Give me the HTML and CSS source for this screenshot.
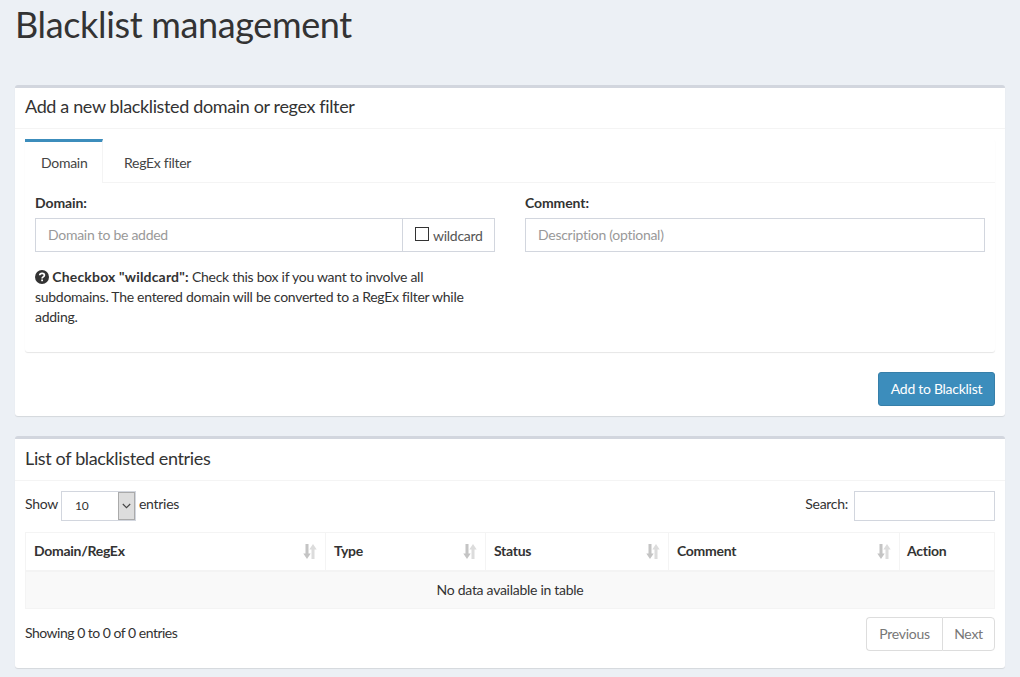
FILE: index.html
```html
<!DOCTYPE html>
<html lang="en">
<head>
  <meta charset="UTF-8" />
  <title>Blacklist management</title>
  <link rel="stylesheet" href="styles.css">
</head>
<body>
  <svg width="0" height="0" class="defs">
    <symbol id="sort" viewBox="0 0 15 15">
      <path d="M2.500 0h3v9.500h2.200L4 15 .3 9.500h2.200z" fill="#c4c4c4"/>
      <path d="M11.500 15h-3V5.500H6.300L10 0l3.700 5.500h-2.200z" fill="#dcdcdc"/>
    </symbol>
  </svg>

  <h1 class="page-title">Blacklist management</h1>

  <section class="box">
    <div class="box-header"><h3>Add a new blacklisted domain or regex filter</h3></div>
    <div class="box-body">
      <div class="tabs">
        <ul class="tab-list">
          <li class="tab active">Domain</li>
          <li class="tab">RegEx filter</li>
        </ul>
        <div class="tab-content">
          <div class="form-row">
            <div class="form-col">
              <label class="field-label">Domain:</label>
              <div class="input-group">
                <input class="form-control" type="text" placeholder="Domain to be added">
                <label class="addon"><input class="check" type="checkbox"> wildcard</label>
              </div>
              <p class="help">
                <svg class="help-icon" viewBox="0 0 14 14" width="14" height="14">
                  <circle cx="7" cy="7" r="7" fill="#333"/>
                  <path d="M4.700 5.300C4.800 4 5.800 3.300 7.100 3.300c1.300 0 2.300.8 2.300 1.900 0 1.700-2.300 1.700-2.300 3.200" fill="none" stroke="#fff" stroke-width="1.700"/>
                  <rect x="6.200" y="9.500" width="1.800" height="1.700" fill="#fff"/>
                </svg>
                <strong>Checkbox "wildcard":</strong> Check this box if you want to involve all<br>
                subdomains. The entered domain will be converted to a RegEx filter while<br>
                adding.
              </p>
            </div>
            <div class="form-col">
              <label class="field-label">Comment:</label>
              <input class="form-control" type="text" placeholder="Description (optional)">
            </div>
          </div>
        </div>
      </div>
    </div>
    <div class="box-footer">
      <button class="btn-primary" type="button">Add to Blacklist</button>
    </div>
  </section>

  <section class="box">
    <div class="box-header box-header-list"><h3>List of blacklisted entries</h3></div>
    <div class="box-body box-body-list">
      <div class="table-top">
        <div class="length">
          Show
          <div class="select"><span class="select-value">10</span><span class="select-arrow"><svg width="9" height="6" viewBox="0 0 9 6"><path d="M.8 1l3.700 3.700L8.200 1" fill="none" stroke="#444" stroke-width="1.100"/></svg></span></div>
          entries
        </div>
        <div class="search">Search: <input class="search-input" type="text"></div>
      </div>
      <table class="data-table">
        <thead>
          <tr>
            <th class="col-domain"><div class="th-inner">Domain/RegEx<svg class="sort-icon"><use href="#sort"/></svg></div></th>
            <th class="col-type"><div class="th-inner">Type<svg class="sort-icon"><use href="#sort"/></svg></div></th>
            <th class="col-status"><div class="th-inner">Status<svg class="sort-icon"><use href="#sort"/></svg></div></th>
            <th class="col-comment"><div class="th-inner">Comment<svg class="sort-icon"><use href="#sort"/></svg></div></th>
            <th class="col-action">Action</th>
          </tr>
        </thead>
        <tbody>
          <tr><td colspan="5">No data available in table</td></tr>
        </tbody>
      </table>
      <div class="table-bottom">
        <div class="info">Showing 0 to 0 of 0 entries</div>
        <div class="pagination"><a class="page-btn page-prev">Previous</a><a class="page-btn page-next">Next</a></div>
      </div>
    </div>
  </section>
</body>
</html>
```

FILE: styles.css
```css
* {
  box-sizing: border-box;
}
body {
  margin: 0;
  padding: 0 15px;
  background: #ecf0f5;
  color: #333;
  font-family: "Lato", "Liberation Sans", sans-serif;
  font-size: 14px;
  line-height: 20px;
  letter-spacing: -0.28px;
}
.defs {
  display: block;
  height: 0;
}
.page-title {
  margin: 0;
  padding-top: 4px;
  height: 85px;
  font-size: 36px;
  line-height: 40px;
  font-weight: 400;
  letter-spacing: -0.35px;
}
.box {
  background: #fff;
  border-top: 3px solid #d2d6de;
  border-radius: 3px;
  box-shadow: 0 1px 1px rgba(0,0,0,0.1);
  margin-bottom: 20px;
}
.box-header {
  height: 41px;
  padding: 8px 10px;
  border-bottom: 1px solid #f4f4f4;
}
.box-header-list {
  height: 42px;
  padding-top: 9px;
}
.box-header h3 {
  margin: 0;
  font-size: 18px;
  line-height: 20px;
  font-weight: 400;
  letter-spacing: -0.36px;
}
.box-body {
  padding: 10px;
}
.box-body-list {
  padding-bottom: 17px;
}
.tabs {
  border-radius: 3px;
  box-shadow: 0 1px 1px rgba(0,0,0,0.1);
}
.tab-list {
  display: flex;
  margin: 0;
  padding: 0;
  list-style: none;
  height: 44px;
  border-bottom: 1px solid #f4f4f4;
}
.tab {
  padding: 11px 16px 0;
  margin-right: 5px;
  border-top: 3px solid transparent;
  color: #444;
}
.tab.active {
  width: 78px;
  height: 44px;
  border-top-color: #3c8dbc;
  border-right: 1px solid #f4f4f4;
  background: #fff;
}
.tab-content {
  height: 169px;
  padding: 10px;
}
.form-row {
  display: grid;
  grid-template-columns: 1fr 1fr;
  gap: 30px;
}
.field-label {
  display: block;
  margin-bottom: 5px;
  font-weight: 700;
  letter-spacing: -0.1px;
}
.form-control {
  display: block;
  width: 100%;
  height: 34px;
  padding: 5px 12px 7px;
  border: 1px solid #d2d6de;
  font: inherit;
  letter-spacing: inherit;
  color: #555;
  outline: none;
}
.form-control::placeholder {
  color: #999;
  opacity: 1;
}
.input-group {
  display: flex;
}
.input-group .form-control {
  flex: 1;
  min-width: 0;
}
.addon {
  display: flex;
  align-items: center;
  gap: 4px;
  width: 93px;
  flex-shrink: 0;
  margin-left: -1px;
  padding: 2px 0 0 12px;
  border: 1px solid #d2d6de;
  color: #555;
}
.check {
  appearance: none;
  width: 14px;
  height: 14px;
  margin: -4px 0 0;
  border: 1px solid #333;
  background: #fff;
}
.help {
  margin: 15px 0 0;
}
.help strong {
  letter-spacing: 0.17px;
}
.help-icon {
  vertical-align: -2px;
}
.box-footer {
  display: flex;
  justify-content: flex-end;
  padding: 10px;
}
.btn-primary {
  height: 34px;
  width: 117px;
  padding: 0;
  background: #3c8dbc;
  border: 1px solid #367fa9;
  border-radius: 3px;
  color: #fff;
  font: inherit;
  letter-spacing: inherit;
}
.table-top {
  display: flex;
  justify-content: space-between;
  height: 41px;
}
.length, .search {
  display: flex;
  align-items: flex-start;
  gap: 3px;
  line-height: 26px;
}
.search {
  gap: 6px;
}
.select {
  display: flex;
  width: 75px;
  height: 30px;
  border: 1px solid #d2d6de;
}
.select-value {
  flex: 1;
  padding: 1px 0 0 13px;
  font-size: 12px;
}
.select-arrow {
  display: flex;
  align-items: center;
  justify-content: center;
  width: 17px;
  background: #ddd;
  border: 1px solid #aaa;
}
.search-input {
  width: 141px;
  height: 30px;
  border: 1px solid #d2d6de;
  outline: none;
}
.data-table {
  width: 100%;
  border-collapse: collapse;
  table-layout: fixed;
  border: 1px solid #f4f4f4;
}
.data-table th {
  height: 38px;
  padding: 0 7px 0 8px;
  text-align: left;
  font-weight: 700;
  border: 1px solid #f4f4f4;
  border-bottom-width: 2px;
}
.data-table .col-action {
  padding-left: 7px;
}
.th-inner {
  display: flex;
  justify-content: space-between;
  align-items: center;
}
.sort-icon {
  width: 15px;
  height: 15px;
}
.col-domain { width: 300px; }
.col-type { width: 160px; }
.col-status { width: 183px; }
.col-comment { width: 231px; }
.data-table td {
  height: 38px;
  padding: 0 8px;
  text-align: center;
  background: #f9f9f9;
  border: 1px solid #f4f4f4;
}
.table-bottom {
  display: flex;
  justify-content: space-between;
  align-items: flex-start;
  padding-top: 8px;
}
.info {
  padding-top: 6px;
  letter-spacing: -0.5px;
}
.pagination {
  display: flex;
}
.page-btn {
  height: 34px;
  padding-top: 6px;
  text-align: center;
  border: 1px solid #ddd;
  color: #777;
}
.page-prev {
  width: 76px;
  border-radius: 4px 0 0 4px;
  border-right: 0;
}
.page-next {
  width: 53px;
  border-radius: 0 4px 4px 0;
}
```
